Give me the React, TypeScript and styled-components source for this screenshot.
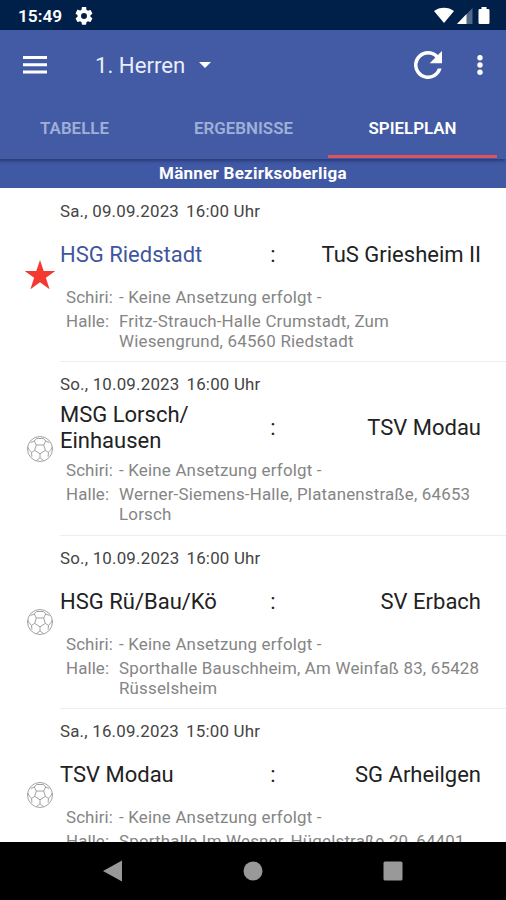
import React from "react";
import styled, { createGlobalStyle } from "styled-components";

const Global = createGlobalStyle`
  *, *::before, *::after { box-sizing: border-box; }
  body { margin: 0; background: #fff; }
`;

const Screen = styled.div`
  display: flex;
  flex-direction: column;
  width: 506px;
  height: 900px;
  overflow: hidden;
  background: #fff;
  font-family: Roboto, "Liberation Sans", sans-serif;
`;

const StatusBar = styled.header`
  display: flex;
  align-items: center;
  flex: none;
  height: 30px;
  padding: 1px 15px 0 18px;
  background: #001f49;
  color: #fff;
`;

const Clock = styled.span`
  width: 57px;
  font-size: 17.3px;
  font-weight: 600;
  white-space: nowrap;
`;

const StatusIcons = styled.div`
  display: flex;
  gap: 3px;
  margin-left: auto;
`;

const Toolbar = styled.div`
  display: flex;
  align-items: center;
  flex: none;
  height: 69px;
  padding: 0 23px 0 23px;
  background: #435ba4;
  color: #fff;
`;

const IconButton = styled.button<{ $gap?: number }>`
  display: flex;
  padding: 0;
  border: 0;
  background: none;
  color: inherit;
  margin-left: ${(p) => p.$gap ?? 0}px;
`;

const TeamPicker = styled.button`
  display: flex;
  align-items: center;
  gap: 14px;
  margin: 1px auto 0 48px;
  padding: 0;
  border: 0;
  background: none;
  color: #e9edfb;
  font: 400 22.2px/28px Roboto, sans-serif;
`;

const Tabs = styled.nav`
  display: grid;
  grid-template-columns: repeat(3, 169px);
  flex: none;
  width: 516px;
  height: 60px;
  margin-left: -10px;
  background: #435ba4;
  box-shadow: 0 3px 3px -1px rgba(15, 28, 70, 0.5);
  z-index: 1;
`;

const Tab = styled.button<{ $active?: boolean }>`
  display: flex;
  align-items: center;
  justify-content: center;
  height: 59px;
  padding: 2px 0 0;
  border: 0;
  border-bottom: 3px solid ${(p) => (p.$active ? "#e1525f" : "transparent")};
  background: none;
  color: ${(p) => (p.$active ? "#fff" : "#9fb0d8")};
  font: 600 16.9px/20px Roboto, sans-serif;
`;

const League = styled.h1`
  flex: none;
  height: 29px;
  margin: 0;
  background: #4059a5;
  color: #fff;
  text-align: center;
  font-size: 17px;
  font-weight: 700;
  line-height: 29px;
  letter-spacing: 0.25px;
`;

const Matches = styled.main`
  flex: 1;
  min-height: 0;
  overflow: hidden;
`;

const Match = styled.article`
  display: grid;
  grid-template-columns: 60px 1fr;
  height: 173.4px;
`;

const Marker = styled.div`
  display: flex;
  align-items: center;
  justify-content: center;
  padding: 1px 0 0 19px;
`;

const Body = styled.div`
  border-top: 1px solid #eeeeee;
  padding-top: 12px;

  ${Match}:first-child & {
    border-top-color: transparent;
  }
`;

const Kickoff = styled.div`
  display: flex;
  gap: 7px;
  height: 20px;
  color: #444;
  font-size: 16.9px;
  line-height: 20px;
  letter-spacing: 0.2px;
`;

const Pairing = styled.div`
  display: grid;
  grid-template-columns: 192px 42px 1fr;
  align-items: center;
  height: 66px;
  padding: 2px 25px 0 0;
  color: #222;
  font-size: 22px;
  line-height: 26px;
`;

const Team = styled.span<{ $own?: boolean; $away?: boolean }>`
  color: ${(p) => (p.$own ? "#3f569e" : "inherit")};
  text-align: ${(p) => (p.$away ? "right" : "left")};
  white-space: pre-line;
`;

const Colon = styled.span`
  text-align: center;
`;

const Details = styled.dl`
  display: grid;
  grid-template-columns: 53px 1fr;
  row-gap: 4px;
  margin: 0;
  padding-left: 6px;
  color: #858585;
  font-size: 16.9px;
  line-height: 20px;
  letter-spacing: 0.2px;
`;

const Term = styled.dt`
  margin: 0;
  letter-spacing: 0.1px;
`;

const Value = styled.dd`
  margin: 0;
  white-space: pre-line;
`;

const NavBar = styled.footer`
  display: flex;
  align-items: center;
  justify-content: center;
  gap: 120px;
  flex: none;
  height: 58px;
  background: #000;
`;

const Gear = () => (
  <svg width="18" height="18" viewBox="2 2 20 20" fill="#fff">
    <path d="M19.14 12.94c.04-.3.06-.61.06-.94s-.02-.64-.07-.94l2.03-1.58a.49.49 0 0 0 .12-.61l-1.92-3.32a.49.49 0 0 0-.59-.22l-2.39.96a7 7 0 0 0-1.62-.94l-.36-2.54A.48.48 0 0 0 13.92 2h-3.84a.47.47 0 0 0-.47.41l-.36 2.54c-.59.24-1.13.57-1.62.94l-2.39-.96a.48.48 0 0 0-.59.22L2.74 8.87a.47.47 0 0 0 .12.61l2.03 1.58c-.05.3-.09.63-.09.94s.02.64.07.94l-2.03 1.58a.49.49 0 0 0-.12.61l1.92 3.32c.12.22.37.29.59.22l2.39-.96c.5.38 1.03.7 1.62.94l.36 2.54c.05.24.24.41.48.41h3.84c.24 0 .44-.17.47-.41l.36-2.54a7 7 0 0 0 1.62-.94l2.39.96c.22.08.47 0 .59-.22l1.92-3.32a.47.47 0 0 0-.12-.61zM12 15.3a3.300 3.300 0 1 1 0-6.600 3.300 3.300 0 0 1 0 6.600z" />
  </svg>
);

const Signals = () => (
  <StatusIcons>
    <svg width="20" height="18" viewBox="0 0 20 18" fill="#fff">
      <path d="M0 4C5.5-.5 14.500-.5 20 4L10 16z" />
    </svg>
    <svg width="16" height="18" viewBox="0 0 16 18">
      <path d="M0 17 15.500 1V17z" fill="#536987" />
      <path d="M0 17 9.500 7V17z" fill="#fff" />
    </svg>
    <svg width="15" height="18" viewBox="0 0 15 18" fill="#fff">
      <path d="M5.500 0h5v2h1.700q1.300 0 1.300 1.300V15.700q0 1.300-1.300 1.300H3.800q-1.300 0-1.300-1.300V3.300Q2.500 2 3.800 2h1.700z" />
    </svg>
  </StatusIcons>
);

const MenuIcon = () => (
  <svg width="24" height="18" viewBox="0 0 24 18" fill="#fff">
    <path d="M0 0h24v3H0zM0 7.300h24v3H0zM0 14.600h24v3H0z" />
  </svg>
);

const Caret = () => (
  <svg width="12" height="6" viewBox="0 0 12 6" fill="#fff">
    <path d="M0 0h12L6 6z" />
  </svg>
);

const RefreshIcon = () => (
  <svg width="28" height="28" viewBox="4 4 16 16" fill="#fff">
    <path d="M17.650 6.350A7.960 7.960 0 0 0 12 4a8 8 0 1 0 7.730 10h-2.080A6 6 0 1 1 12 6c1.660 0 3.140.69 4.220 1.780L13 11h7V4z" />
  </svg>
);

const MoreIcon = () => (
  <svg width="6" height="22" viewBox="0 0 6 22" fill="#fff">
    <circle cx="3" cy="3.700" r="2.700" />
    <circle cx="3" cy="11" r="2.700" />
    <circle cx="3" cy="18.300" r="2.700" />
  </svg>
);

const Star = () => (
  <svg width="32" height="32" viewBox="0 0 32 32" fill="#f43a30">
    <path d="M16 1l3.700 11h11.600l-9.400 6.800 3.700 11.400L16 23.200 6.400 30.200l3.700-11.400L.7 12h11.600z" />
  </svg>
);

const Ball = () => (
  <svg width="28" height="28" viewBox="0 0 28 28" fill="none" stroke="#979797" strokeWidth="0.9">
    <circle cx="14" cy="14" r="12.500" />
    <path d="M10.300 10h7.400l1.600 5.400L14 18.800l-5.300-3.400zM10.300 10 8.300 6M17.700 10l2-4M19.300 15.400l3.200 2M14 18.800v4M8.700 15.400l-3.200 2M8.300 6 10.500 3.500h7L19.700 6M8.300 6 4.600 7.600M19.700 6l3.700 1.600M5.500 17.400 3 14.500 1.700 12M22.500 17.400l2.500-2.900 1.300-2.500M5.500 17.400l.4 4.200M22.500 17.400l-.4 4.200M14 22.800l-3.600 2.800M14 22.800l3.600 2.800" />
  </svg>
);

const matches = [
  { date: "Sa., 09.09.2023", time: "16:00", home: "HSG Riedstadt", away: "TuS Griesheim II", hall: "Fritz-Strauch-Halle Crumstadt, Zum\nWiesengrund, 64560 Riedstadt", own: true },
  { date: "So., 10.09.2023", time: "16:00", home: "MSG Lorsch/\nEinhausen", away: "TSV Modau", hall: "Werner-Siemens-Halle, Platanenstraße, 64653\nLorsch" },
  { date: "So., 10.09.2023", time: "16:00", home: "HSG Rü/Bau/Kö", away: "SV Erbach", hall: "Sporthalle Bauschheim, Am Weinfaß 83, 65428\nRüsselsheim" },
  { date: "Sa., 16.09.2023", time: "15:00", home: "TSV Modau", away: "SG Arheilgen", hall: "Sporthalle Im Wesner, Hügelstraße 20, 64401" },
];

export default function App() {
  return (
    <Screen>
      <Global />
      <StatusBar>
        <Clock>15:49</Clock>
        <Gear />
        <Signals />
      </StatusBar>
      <Toolbar>
        <IconButton aria-label="Menü"><MenuIcon /></IconButton>
        <TeamPicker>1. Herren<Caret /></TeamPicker>
        <IconButton aria-label="Aktualisieren"><RefreshIcon /></IconButton>
        <IconButton aria-label="Mehr" $gap={35}><MoreIcon /></IconButton>
      </Toolbar>
      <Tabs>
        <Tab>TABELLE</Tab>
        <Tab>ERGEBNISSE</Tab>
        <Tab $active>SPIELPLAN</Tab>
      </Tabs>
      <League>Männer Bezirksoberliga</League>
      <Matches>
        {matches.map((m) => (
          <Match key={m.home}>
            <Marker>{m.own ? <Star /> : <Ball />}</Marker>
            <Body>
              <Kickoff>
                <span>{m.date}</span>
                <span>{m.time} Uhr</span>
              </Kickoff>
              <Pairing>
                <Team $own={m.own}>{m.home}</Team>
                <Colon>:</Colon>
                <Team $away>{m.away}</Team>
              </Pairing>
              <Details>
                <Term>Schiri:</Term>
                <Value>- Keine Ansetzung erfolgt -</Value>
                <Term>Halle:</Term>
                <Value>{m.hall}</Value>
              </Details>
            </Body>
          </Match>
        ))}
      </Matches>
      <NavBar>
        <svg width="20" height="22" viewBox="0 0 20 22" fill="#999"><path d="M0 11 19 .5v21z" /></svg>
        <svg width="20" height="20" viewBox="0 0 20 20" fill="#999"><circle cx="10" cy="10" r="9.500" /></svg>
        <svg width="20" height="20" viewBox="0 0 20 20" fill="#999"><rect x=".5" y=".5" width="19" height="19" rx="1.500" /></svg>
      </NavBar>
    </Screen>
  );
}
